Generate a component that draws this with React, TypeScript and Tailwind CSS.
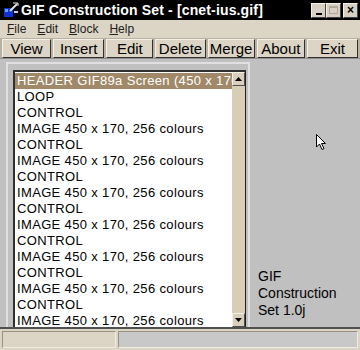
const rows = [
  "HEADER GIF89a Screen (450 x 170)",
  "LOOP",
  "CONTROL",
  "IMAGE 450 x 170, 256 colours",
  "CONTROL",
  "IMAGE 450 x 170, 256 colours",
  "CONTROL",
  "IMAGE 450 x 170, 256 colours",
  "CONTROL",
  "IMAGE 450 x 170, 256 colours",
  "CONTROL",
  "IMAGE 450 x 170, 256 colours",
  "CONTROL",
  "IMAGE 450 x 170, 256 colours",
  "CONTROL",
  "IMAGE 450 x 170, 256 colours",
];

const tools = [
  { name: "View", w: "w-[50px]" },
  { name: "Insert", w: "w-[52px]" },
  { name: "Edit", w: "w-[48px]" },
  { name: "Delete", w: "w-[51px]" },
  { name: "Merge", w: "w-[48px]" },
  { name: "About", w: "w-[49px]" },
  { name: "Exit", w: "w-[52px]" },
];

const menus = [
  { key: "F", rest: "ile" },
  { key: "E", rest: "dit" },
  { key: "B", rest: "lock" },
  { key: "H", rest: "elp" },
];

const AppIcon = () => (
  <svg width="16" height="16" viewBox="0 0 16 16" className="shrink-0">
    <rect x="1" y="6" width="9" height="9" fill="#1030d0" />
    <rect x="2" y="7" width="3" height="3" fill="#60a0ff" />
    <path d="M7 9 L14 2" stroke="#e0e0e0" strokeWidth="2" />
    <path d="M10 1 L15 1 L15 4" stroke="#f0f0f0" strokeWidth="1" fill="none" />
    <rect x="11" y="9" width="4" height="2" fill="#d0d0d0" />
  </svg>
);

const CaptionButton = ({ children, dim }: { children: React.ReactNode; dim?: boolean }) => (
  <div
    className={`w-[15px] h-[15px] bg-[#d8d0c4] border-t border-l border-[#f4f0e8] border-r border-b border-r-[#404040] border-b-[#404040] flex items-center justify-center text-[12px] font-bold leading-none ${dim ? "text-[#a8a090]" : "text-black"}`}
  >
    {children}
  </div>
);

const ScrollArrow = ({ up }: { up?: boolean }) => (
  <div className="w-[13px] h-[14px] bg-[#d8d0bc] border-t border-l border-[#f4f0e4] border-r border-b border-r-[#505050] border-b-[#505050] flex items-center justify-center shrink-0">
    <svg width="7" height="4" viewBox="0 0 7 4">
      {up ? <path d="M3.5 0 L7 4 L0 4 Z" fill="#000" /> : <path d="M0 0 L7 0 L3.5 4 Z" fill="#000" />}
    </svg>
  </div>
);

const Cursor = () => (
  <svg width="11" height="17" viewBox="0 0 11 17" className="absolute left-[316px] top-[134px]">
    <path d="M0.5 0.5 L0.5 13 L3.5 10 L6 15.5 L8 14.5 L5.5 9.5 L9.5 9.5 Z" fill="#fff" stroke="#000" strokeWidth="1" />
  </svg>
);

export default function App() {
  return (
    <div
      className="relative w-[360px] h-[350px] bg-[#c0c0c0] flex flex-col overflow-hidden select-none"
      style={{ fontFamily: '"Liberation Sans", Arial, sans-serif' }}
    >
      {/* title bar */}
      <div className="h-[20px] bg-black flex items-center pl-[3px] pr-[2px] shrink-0">
        <AppIcon />
        <div className="ml-[2px] text-white font-bold text-[14px] leading-none whitespace-nowrap tracking-[0.15px]">
          GIF Construction Set - [cnet-ius.gif]
        </div>
        <div className="ml-auto flex">
          <CaptionButton>
            <span className="mt-[7px] block w-[6px] h-[2px] bg-black" />
          </CaptionButton>
          <CaptionButton dim>
            <span className="block w-[9px] h-[8px] border border-[#b0a898] border-t-2" />
          </CaptionButton>
          <div className="w-[2px]" />
          <CaptionButton>×</CaptionButton>
        </div>
      </div>

      {/* menu bar */}
      <div className="h-[18px] bg-[#dcd4c4] flex items-center pl-[7px] gap-[11px] text-[12px] text-[#202020] shrink-0">
        {menus.map((m) => (
          <span key={m.key}>
            <span className="underline">{m.key}</span>
            {m.rest}
          </span>
        ))}
      </div>

      {/* toolbar */}
      <div className="h-[20px] bg-[#b8b0a0] flex items-center gap-[2px] px-[2px] shrink-0">
        {tools.map((t) => (
          <div
            key={t.name}
            className={`${t.w} h-[19px] bg-[#dcd4c4] border-t border-l border-[#f4f0e8] border-r border-b border-r-[#303030] border-b-[#303030] flex items-center justify-center text-[15px] text-black leading-none`}
          >
            {t.name}
          </div>
        ))}
      </div>

      {/* main */}
      <div className="flex-1 flex min-h-0 border-t border-[#909090]">
        <div className="w-[244px] ml-[6px] mt-[3px] border-t-2 border-l-2 border-r-2 border-[#e0e0e0] pt-[6px] pl-[5px] pr-[2px] flex">
          <div className="flex-1 flex min-w-0 border-t-2 border-l-2 border-[#303030] border-r border-r-[#202020] bg-white">
            <div className="flex-1 min-w-0 pt-[1px] overflow-hidden">
              {rows.map((r, i) => (
                <div
                  key={i}
                  className={`h-[16px] pl-[2px] text-[13px] leading-[16px] whitespace-nowrap tracking-[0.35px] ${i === 0 ? "bg-[#a08868] text-white" : "text-black"}`}
                >
                  {r}
                </div>
              ))}
            </div>
            <div className="w-[13px] bg-[#d8ceb8] flex flex-col justify-between shrink-0">
              <ScrollArrow up />
              <ScrollArrow />
            </div>
          </div>
        </div>
        <div className="flex-1 flex flex-col justify-end pl-[8px] pb-[8px] text-[14px] leading-[17px] text-black">
          <div>GIF</div>
          <div>Construction</div>
          <div>Set 1.0j</div>
        </div>
      </div>

      {/* status bar */}
      <div className="h-[23px] bg-[#dcd4c4] border-t-2 border-[#505050] flex items-stretch gap-[2px] px-[2px] py-[2px] shrink-0">
        <div className="w-[114px] bg-[#dcd4c4] border border-[#f0ece0] border-t-[#989080] border-l-[#989080]" />
        <div className="flex-1 bg-[#c8c8c8] border border-[#f0ece0] border-t-[#989080] border-l-[#989080]" />
      </div>

      <Cursor />
    </div>
  );
}
